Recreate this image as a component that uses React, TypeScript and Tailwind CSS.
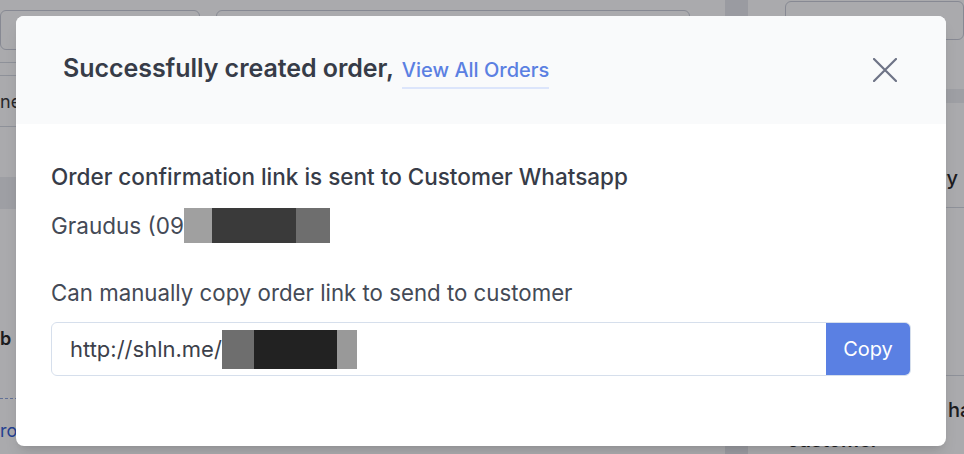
function Redacted({ parts, h }: { parts: { w: string; c: string }[]; h: string }) {
	return (
		<span className={`flex ${h}`}>
			{parts.map((p, i) => (
				<span key={i} className={`${p.w} ${p.c}`} />
			))}
		</span>
	);
}

export default function App() {
	return (
		<div className="relative h-[454px] w-[964px] overflow-hidden bg-white font-['Inter',sans-serif]">
			{/* ───────── page behind the dialog ───────── */}
			<div className="flex h-full">
				<div className="flex w-[725px] shrink-0 flex-col">
					<div className="flex gap-4 pt-[10px]">
						<div className="h-[40px] w-[200px] rounded-md border border-[#c8ccd6]" />
						<div className="h-[40px] w-[474px] rounded-md border border-[#c8ccd6]" />
					</div>
					<div className="mt-[12px] h-px bg-[#d4d8e0]" />
					<div className="mt-[12px] h-px bg-[#d4d8e0]" />
					<div className="flex h-[50px] items-center whitespace-nowrap text-[18px] text-[#333]">ne</div>
					<div className="h-px bg-[#d4d8e0]" />
					<div className="mt-[50px] h-[32px] bg-[#eceef1]" />
					<div className="mt-[116px] text-[18px] font-semibold text-[#222]">b</div>
					<div className="mt-[46px] border-t border-dashed border-[#8fa6dd]" />
					<div className="mt-[18px] text-[18px] text-[#2f5bd3]">ro</div>
				</div>
				<div className="w-[23px] shrink-0 bg-[#e6e8ec]" />
				<div className="flex min-w-0 flex-1 flex-col overflow-hidden pl-[37px]">
					<div className="mt-[1px] h-[40px] rounded-md border border-[#c8ccd6]" />
					<div className="mt-[49px] h-[14px] bg-[#eceef1]" />
					<div className="mt-[60px] whitespace-nowrap pr-[6px] text-right text-[20px] font-medium text-[#222]">
						Delivery
					</div>
					<div className="mt-[14px] h-px bg-[#d4d8e0]" />
					<div className="mt-[167px] h-px bg-[#d4d8e0]" />
					<div className="mt-[20px] whitespace-nowrap pl-[163px] text-[20px] font-medium leading-[28px] text-[#222]">
						has
					</div>
					<div className="mt-[2px] whitespace-nowrap pl-[2px] text-[20px] font-semibold leading-[28px] text-[#222]">
						customer
					</div>
				</div>
			</div>

			{/* ───────── overlay ───────── */}
			<div className="absolute inset-0 bg-[rgba(20,20,28,0.36)]" />

			{/* ───────── dialog ───────── */}
			<div className="absolute left-4 top-4 flex h-[430px] w-[930px] flex-col overflow-hidden rounded-lg bg-white shadow-lg">
				<div className="flex h-[108px] items-center justify-between bg-[#f9fafb] pl-[47px] pr-[49px]">
					<div className="flex items-baseline gap-[8px] pb-[2px]">
						<span className="text-[25px] font-semibold tracking-[-0.05px] text-[#373c48]">
							Successfully created order,
						</span>
						<span className="border-b-2 border-[#dce5fb] pb-[2px] text-[20px] font-medium text-[#5b80e2]">
							View All Orders
						</span>
					</div>
					<svg width="24" height="24" viewBox="0 0 24 24" className="text-[#6e7386]">
						<path d="M1 1 L23 23 M23 1 L1 23" stroke="currentColor" strokeWidth="2.2" strokeLinecap="round" fill="none" />
					</svg>
				</div>

				<div className="flex flex-col px-[35px] pt-[39px]">
					<p className="text-[22.5px] font-medium leading-[28px] text-[#373c48]">
						Order confirmation link is sent to Customer Whatsapp
					</p>
					<div className="mt-[17px] flex h-[35px] items-center text-[22.5px] text-[#444a56]">
						<span>Graudus (09</span>
						<Redacted
							h="h-[35px]"
							parts={[
								{ w: "w-[28px]", c: "bg-[#a0a0a0]" },
								{ w: "w-[84px]", c: "bg-[#3a3a3a]" },
								{ w: "w-[34px]", c: "bg-[#6e6e6e]" },
							]}
						/>
					</div>
					<p className="mt-[36px] text-[22.25px] leading-[28px] text-[#444a56]">
						Can manually copy order link to send to customer
					</p>
					<div className="mt-[15px] flex h-[54px] overflow-hidden rounded-md border border-[#d6dfec]">
						<div className="flex flex-1 items-center pl-[18px] text-[22px] text-[#3c404a]">
							<span>http://shln.me/</span>
							<Redacted
								h="h-[39px]"
								parts={[
									{ w: "w-[32px]", c: "bg-[#6e6e6e]" },
									{ w: "w-[83px]", c: "bg-[#222222]" },
									{ w: "w-[20px]", c: "bg-[#999999]" },
								]}
							/>
						</div>
						<button className="w-[84px] bg-[#5a80e3] text-[20px] text-white">Copy</button>
					</div>
				</div>
			</div>
		</div>
	);
}
